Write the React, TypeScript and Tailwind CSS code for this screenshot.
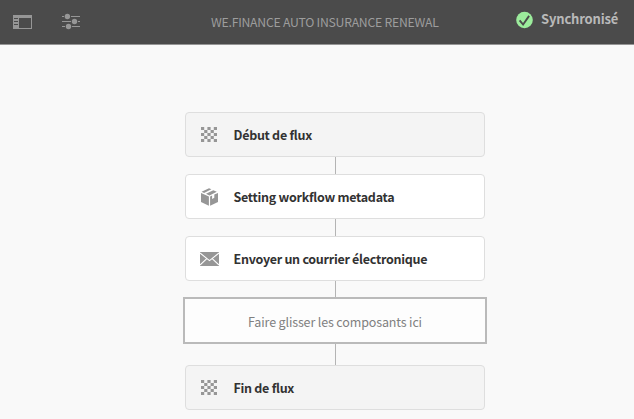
import type { ReactNode } from "react";

function Checker() {
  const cells: ReactNode[] = [];
  for (let row = 0; row < 5; row++) {
    for (let col = 0; col < 5; col++) {
      if ((row + col) % 2 === 0) {
        cells.push(<rect key={`${row}-${col}`} x={col * 3.2} y={row * 3} width="3.2" height="3" />);
      }
    }
  }
  return <svg width="17" height="15" viewBox="0 0 17 15" fill="#969696">{cells}</svg>;
}

function Package() {
  return (
    <svg width="19" height="18" viewBox="0 0 19 18" fill="#969696">
      <path d="M1.6 3.7 9 .2l2.4 1.1-7.3 3.6zM6 5.8l7.3-3.6 3.5 1.6L9.5 7.4zM1 5l7.9 3.5v9.2L1 13.9zM10.1 8.5l2-1v3.4l2.2-1.1V6.5L18 5v8.9l-7.9 3.8z" />
    </svg>
  );
}

function Mail() {
  return (
    <svg width="19" height="14" viewBox="0 0 19 14">
      <path d="M0 0h19v14H0z" fill="#969696" />
      <path d="m0 1 9.5 7.6L19 1M0 13l6.8-6.4M19 13l-6.8-6.4" fill="none" stroke="#fff" strokeWidth="1.1" />
    </svg>
  );
}

function Step({ icon, label, muted }: { icon: ReactNode; label: ReactNode; muted?: boolean }) {
  return (
    <div className={`flex h-[45px] w-[300px] items-center rounded-[4px] border border-[#dedede] ${muted ? "bg-[#f4f4f4]" : "bg-white"}`}>
      <span className="flex w-[47px] items-center justify-center">{icon}</span>
      <span className="pl-[0.5px] text-[12.5px] leading-5 font-bold tracking-[-0.28px] whitespace-nowrap text-[#323232]">{label}</span>
    </div>
  );
}

export default function App() {
  return (
    <div className="h-[419px] w-[634px] overflow-hidden bg-[#f9f9f9] font-['Noto_Sans_CJK_SC','Open_Sans',sans-serif]">
      <header className="flex h-[45px] items-start border-b border-[#969696] bg-[#4b4b4b]">
        <svg className="mt-[15px] ml-[13px] shrink-0" width="19" height="14" viewBox="0 0 19 14">
          <path fillRule="evenodd" d="M0 0h19v14H0zM6 3v10h12V3zM1 3h4v1H1zM1 6h4v1H1zM1 9h4v1H1z" fill="#969696" />
        </svg>
        <svg className="mt-[13px] ml-[29px] shrink-0" width="20" height="17" viewBox="0 0 20 17" fill="#969696">
          <path d="M1 3h2v1H1zM10 3h9v1h-9zM1 8h9v1H1zM17 8h2v1h-2zM1 13h3v1H1zM11 13h8v1h-8z" />
          <circle cx="6.4" cy="3.5" r="2.7" /><circle cx="13.5" cy="8.5" r="2.7" /><circle cx="7.5" cy="13.5" r="2.7" />
        </svg>
        <h1 className="mt-[12px] ml-[130px] w-[228px] text-[12.25px] leading-5 tracking-[-0.25px] whitespace-nowrap text-[#9d9d9d]">WE.FINANCE AUTO INSURANCE RENEWAL</h1>
        <svg className="mt-[11px] ml-[77px] shrink-0" width="18" height="18" viewBox="0 0 18 18">
          <circle cx="8.5" cy="9" r="8.3" fill="#9cec9c" />
          <path d="m3.6 9.3 3.5 4.2 6-8.6" fill="none" stroke="#4b4b4b" strokeWidth="1.9" />
        </svg>
        <span className="mt-[9px] ml-[7px] text-[13px] leading-5 font-bold tracking-[-0.17px] whitespace-nowrap text-[#b9b9b9]">Synchronisé</span>
      </header>
      <main className="ml-[183px] flex w-[304px] flex-col items-center pt-[67px]">
        <Step icon={<Checker />} label="Début de flux" muted />
        <div className="ml-px h-[17px] w-px bg-[#b4b4b4]" />
        <Step icon={<Package />} label="Setting workflow metadata" />
        <div className="ml-px h-[17px] w-px bg-[#b4b4b4]" />
        <Step icon={<Mail />} label="Envoyer un courrier électronique" />
        <div className="ml-px h-[16px] w-px bg-[#b4b4b4]" />
        <div className="flex h-[47px] w-[304px] items-center justify-center border-2 border-[#bababa] bg-[#fdfdfd] pt-0.5 text-[12.5px] leading-5 tracking-[-0.14px] text-[#808080]">
          <span>Faire glisser les composants ici</span>
        </div>
        <div className="ml-px h-[21px] w-px bg-[#b4b4b4]" />
        <Step icon={<Checker />} label="Fin de flux" muted />
      </main>
    </div>
  );
}
